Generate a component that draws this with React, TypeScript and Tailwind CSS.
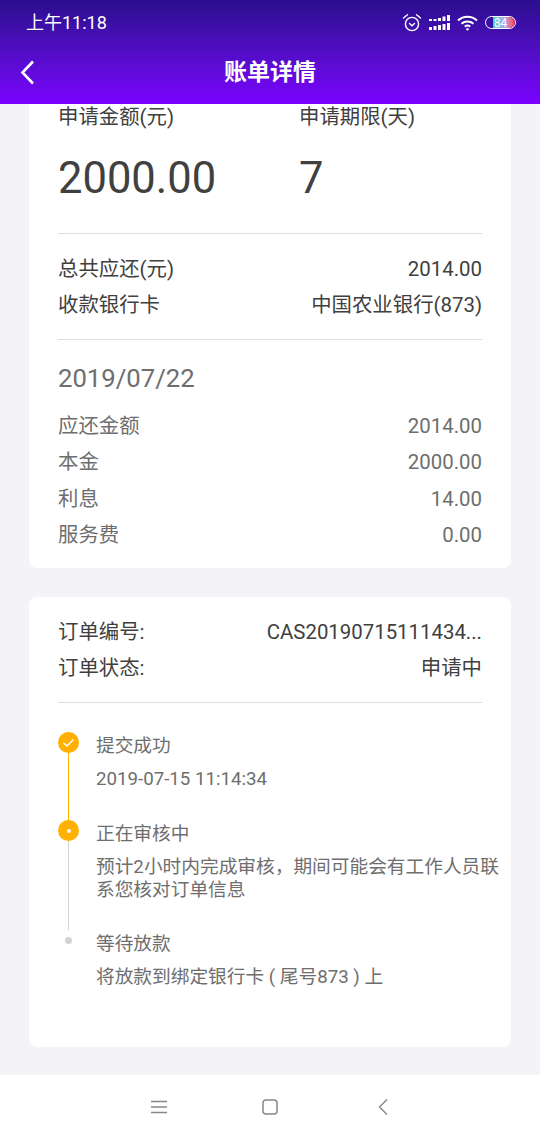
const font = { fontFamily: "Roboto, 'Noto Sans CJK SC', sans-serif" }

function StatusBar() {
  return (
    <div className="flex h-[45px] items-center justify-between pl-[26px] pr-[24px] text-white">
      <span className="text-[18px] leading-none">上午11:18</span>
      <div className="flex items-center gap-[7px]">
        <svg width="20" height="20" viewBox="0 0 20 20" fill="none" stroke="white" strokeWidth="1.4">
          <circle cx="10" cy="11" r="6.6" />
          <path d="M7.5 10.5 L10 12.8 L12.5 10.5" strokeLinecap="round" />
          <path d="M1.5 5 L5.5 1.8 M18.5 5 L14.5 1.8" strokeLinecap="round" />
        </svg>
        <svg width="21" height="16" viewBox="0 0 21 16" fill="white">
          <rect x="0" y="4" width="3" height="2" />
          <rect x="4.5" y="4" width="3" height="2" />
          <rect x="9" y="3" width="3" height="3" />
          <rect x="13.5" y="1.5" width="3" height="4.5" />
          <rect x="18" y="0" width="3" height="6" />
          <rect x="0" y="12" width="3" height="3" />
          <rect x="4.5" y="11" width="3" height="4" />
          <rect x="9" y="10" width="3" height="5" />
          <rect x="13.5" y="9" width="3" height="6" />
          <rect x="18" y="8" width="3" height="7" />
        </svg>
        <svg width="21" height="16" viewBox="0 0 21 16" fill="none" stroke="white" strokeWidth="2">
          <path d="M1 5.5 C6.5 0.5 14.5 0.5 20 5.5" />
          <path d="M4.5 8.8 C8 5.8 13 5.8 16.5 8.8" />
          <path d="M7.8 11.6 C9.4 10.4 11.6 10.4 13.2 11.6" />
          <circle cx="10.5" cy="14.2" r="1.2" fill="white" stroke="none" />
        </svg>
        <div className="relative flex h-[13px] w-[31px] items-center justify-center overflow-hidden rounded-full border border-white">
          <div className="absolute inset-y-0 left-[7px] right-0 rounded-r-full bg-gradient-to-r from-[#20d8c0] via-[#a8a8f0] to-[#ff1040]" />
          <span className="relative text-[12px] leading-none text-white">84</span>
        </div>
      </div>
    </div>
  )
}

function Row({ label, value, muted }: { label: string; value: string; muted?: boolean }) {
  return (
    <div className={`flex h-[36.5px] items-center justify-between text-[20.4px] ${muted ? "text-[#6e6e6e]" : "text-[#404040]"}`}>
      <span>{label}</span>
      <span>{value}</span>
    </div>
  )
}

function Step({
  title,
  lines,
  dot,
  line,
  height,
}: {
  title: string
  lines: string[]
  dot: React.ReactNode
  line?: string
  height: string
}) {
  return (
    <div className={`flex ${height}`}>
      <div className="flex w-[21px] flex-col items-center">
        <div className="flex h-[21px] items-center justify-center">{dot}</div>
        {line && <div className={`w-[1.5px] flex-1 ${line}`} />}
      </div>
      <div className="ml-[17px] flex-1 text-[#6e6e6e]">
        <div className="text-[18.7px] leading-[28px]">{title}</div>
        <div className="mt-[7.5px] text-[18.7px] leading-[23px]">
          {lines.map((l) => (
            <div key={l} className="whitespace-nowrap">{l}</div>
          ))}
        </div>
      </div>
    </div>
  )
}

export default function App() {
  return (
    <div className="flex h-[1140px] w-[540px] flex-col overflow-hidden bg-[#f3f3f8]" style={font}>
      <div className="h-[104px] bg-gradient-to-b from-[#2a0e8e] to-[#7b00ff]">
        <StatusBar />
        <div className="relative flex h-[59px] items-center justify-center pb-[2px]">
          <svg className="absolute left-[20px] top-[15px]" width="15" height="25" viewBox="0 0 15 25" fill="none" stroke="white" strokeWidth="2.6">
            <path d="M13 1.5 L2.5 12.5 L13 23.5" />
          </svg>
          <span className="text-[23px] font-bold text-white">账单详情</span>
        </div>
      </div>

      <div className="mx-[29px] h-[464px] rounded-b-[8px] bg-white px-[29px]">
        <div className="flex h-[130px] border-b border-[#dddddd] text-[#404040]">
          <div className="w-[241px]">
            <div className="text-[20.4px] leading-[27px]">申请金额(元)</div>
            <div className="mt-[18px] text-[43.5px] leading-[60px]">2000.00</div>
          </div>
          <div>
            <div className="text-[20.4px] leading-[27px]">申请期限(天)</div>
            <div className="mt-[18px] text-[43.5px] leading-[60px]">7</div>
          </div>
        </div>
        <div className="flex h-[106px] flex-col justify-center border-b border-[#dddddd] pt-[2px]">
          <Row label="总共应还(元)" value="2014.00" />
          <Row label="收款银行卡" value="中国农业银行(873)" />
        </div>
        <div className="pt-[19px] text-[25.7px] leading-[38px] text-[#6e6e6e]">2019/07/22</div>
        <div className="mt-[11px]">
          <Row label="应还金额" value="2014.00" muted />
          <Row label="本金" value="2000.00" muted />
          <Row label="利息" value="14.00" muted />
          <Row label="服务费" value="0.00" muted />
        </div>
      </div>

      <div className="mx-[29px] mt-[29px] h-[450px] rounded-[8px] bg-white pl-[29px] pr-[10px]">
        <div className="mr-[19px] flex h-[106px] flex-col justify-center border-b border-[#dddddd] pt-[2px]">
          <Row label="订单编号:" value="CAS20190715111434..." />
          <Row label="订单状态:" value="申请中" />
        </div>
        <div className="pt-[29px]">
          <Step
            title="提交成功"
            lines={["2019-07-15 11:14:34"]}
            height="h-[88px]"
            line="bg-[#ffb000]"
            dot={
              <div className="flex h-[21px] w-[21px] items-center justify-center rounded-full bg-[#ffb000]">
                <svg width="13" height="10" viewBox="0 0 13 10" fill="none" stroke="white" strokeWidth="1.5">
                  <path d="M1.5 5 L5 8 L11.5 1.5" />
                </svg>
              </div>
            }
          />
          <Step
            title="正在审核中"
            lines={["预计2小时内完成审核，期间可能会有工作人员联", "系您核对订单信息"]}
            height="h-[110px]"
            line="bg-[#d2d2d2]"
            dot={
              <div className="flex h-[21px] w-[21px] items-center justify-center rounded-full bg-[#ffb000]">
                <div className="h-[4px] w-[4px] rounded-full bg-white" />
              </div>
            }
          />
          <Step
            title="等待放款"
            lines={["将放款到绑定银行卡 ( 尾号873 ) 上"]}
            height="h-[70px]"
            dot={<div className="h-[7px] w-[7px] rounded-full bg-[#d2d2d2]" />}
          />
        </div>
      </div>

      <div className="mt-[28px] flex h-[65px] items-center justify-center bg-white pb-[2px] text-[#888888]">
        <div className="flex w-[238px] items-center justify-between">
          <svg width="16" height="14" viewBox="0 0 16 14" stroke="currentColor" strokeWidth="1.5">
            <path d="M0 1.5 H16 M0 7 H16 M0 12.5 H16" />
          </svg>
          <svg className="mr-[6px]" width="16" height="16" viewBox="0 0 16 16" fill="none" stroke="currentColor" strokeWidth="1.5">
            <rect x="1" y="1" width="14" height="14" rx="3" />
          </svg>
          <svg width="11" height="16" viewBox="0 0 11 16" fill="none" stroke="currentColor" strokeWidth="1.4">
            <path d="M9 0.5 L1.5 8 L9 15.5" />
          </svg>
        </div>
      </div>
    </div>
  )
}
